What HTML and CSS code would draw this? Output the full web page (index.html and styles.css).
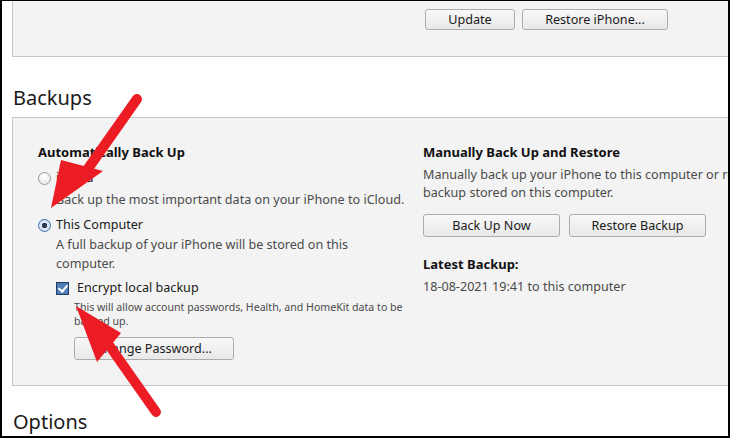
FILE: index.html
```html
<!DOCTYPE html>
<html lang="en">
<head>
    <meta charset="UTF-8">
    <meta name="viewport" content="width=device-width, initial-scale=1.0">
    <title>Backups</title>
    <link rel="stylesheet" href="styles.css">
</head>
<body>
    <div class="frame">
        <div class="panel top-panel">
            <div class="top-buttons">
                <button class="btn btn-update">Update</button>
                <button class="btn btn-restore">Restore iPhone...</button>
            </div>
        </div>

        <h2 class="section-title">Backups</h2>

        <div class="panel backups">
            <div class="col col-left">
                <h3>Automatically Back Up</h3>
                <label class="option"><span class="radio"></span>iCloud</label>
                <p class="desc first">Back up the most important data on your iPhone to iCloud.</p>
                <label class="option"><span class="radio checked"></span>This Computer</label>
                <p class="desc">A full backup of your iPhone will be stored on this<br>computer.</p>
                <label class="option check-row"><span class="checkbox"></span>Encrypt local backup</label>
                <p class="small">This will allow account passwords, Health, and HomeKit data to be<br>backed up.</p>
                <button class="btn btn-password">Change Password...</button>
            </div>
            <div class="col col-right">
                <h3 class="manual">Manually Back Up and Restore</h3>
                <p class="desc right">Manually back up your iPhone to this computer or restore a<br>backup stored on this computer.</p>
                <div class="btn-row">
                    <button class="btn btn-wide">Back Up Now</button>
                    <button class="btn btn-wide">Restore Backup</button>
                </div>
                <h3 class="latest">Latest Backup:</h3>
                <p class="desc date">18-08-2021 19:41 to this computer</p>
            </div>
        </div>

        <h2 class="section-title options">Options</h2>

        <!-- annotation arrows -->
        <svg class="arrows" width="730" height="438" viewBox="0 0 730 438">
            <line x1="137" y1="99" x2="80" y2="180" stroke="#ec1c24" stroke-width="10" stroke-linecap="round"/>
            <polygon points="51,208 61,160 103,171" fill="#ec1c24"/>
            <line x1="156" y1="412" x2="104" y2="338" stroke="#ec1c24" stroke-width="10" stroke-linecap="round"/>
            <polygon points="76,306 97,362 121,333" fill="#ec1c24"/>
        </svg>
    </div>
</body>
</html>
```

FILE: styles.css
```css
html, body {
    margin: 0;
    padding: 0;
}
body {
    font-family: "Noto Sans", "Open Sans", sans-serif;
    font-size: 12.6px;
    color: #4a4a4a;
    background: #fff;
}
.frame {
    position: relative;
    width: 730px;
    height: 438px;
    box-sizing: border-box;
    border: 2px solid #000;
    border-top-width: 1px;
    overflow: hidden;
    padding-left: 10px;
}
.panel {
    background: #f3f3f3;
    border: 1px solid #c6c6c6;
    border-right: none;
    margin-right: -40px;
}
.top-panel {
    border-top: none;
    height: 55px;
}
.top-buttons {
    display: flex;
    gap: 7px;
    padding: 8px 0 0 412px;
}
.btn {
    font-family: inherit;
    font-size: 12.6px;
    color: #1a1a1a;
    background: linear-gradient(#f8f8f8, #e8e8e8);
    border: 1px solid #acacac;
    border-radius: 3px;
    height: 21px;
    padding: 0;
    line-height: 18px;
}
.btn-update {
    width: 90px;
}
.btn-restore {
    width: 146px;
}
.section-title {
    font-weight: normal;
    font-size: 20px;
    line-height: 28px;
    color: #1a1a1a;
    margin: 27px 0 5px 1px;
}
.backups {
    display: flex;
    padding: 25px 0 25px 25px;
}
.col-left {
    width: 385px;
    flex-shrink: 0;
}
.col-right {
    flex: 1;
    min-width: 0;
}
h3 {
    font-size: 13px;
    line-height: 18px;
    font-weight: bold;
    color: #111;
    margin: 0 0 8px;
}
h3.manual {
    margin-bottom: 5px;
}
.option {
    display: flex;
    align-items: center;
    line-height: 18px;
    color: #1a1a1a;
}
.radio {
    width: 11px;
    height: 11px;
    border: 1px solid #9a9a9a;
    border-radius: 50%;
    background: radial-gradient(circle at 50% 35%, #fff, #e4e4e4);
    margin-right: 5px;
}
.radio.checked {
    border-color: #3c6fa8;
    background: radial-gradient(circle, #2b3c52 0 2.5px, #dfe9f5 3px, #c9daef);
}
.desc {
    margin: 0;
    line-height: 19px;
    padding-left: 18px;
}
.desc.first {
    margin: 3px 0 7px;
}
.desc.first + .option + .desc {
    margin-top: 1px;
}
.check-row {
    margin: 6px 0 0 18px;
}
.checkbox {
    width: 11px;
    height: 11px;
    border: 1px solid #1f3a5c;
    background: #4f7fb6;
    margin-right: 8px;
    position: relative;
}
.checkbox::after {
    content: "";
    position: absolute;
    left: 3px;
    top: 0;
    width: 4px;
    height: 7px;
    border: solid #fff;
    border-width: 0 2px 2px 0;
    transform: rotate(40deg);
}
.small {
    font-size: 10.6px;
    line-height: 14px;
    margin: 3px 0 0 36px;
}
.btn-password {
    width: 160px;
    height: 23px;
    margin: 9px 0 0 36px;
}
.desc.right {
    padding-left: 0;
    line-height: 18px;
    white-space: nowrap;
}
.btn-row {
    display: flex;
    gap: 9px;
    margin: 12px 0 18px;
}
.btn-wide {
    width: 137px;
    height: 23px;
}
.latest {
    margin-bottom: 4px;
}
.desc.date {
    padding-left: 0;
}
.options {
    margin-top: 22px;
}
.arrows {
    position: absolute;
    left: -2px;
    top: -1px;
}
```
